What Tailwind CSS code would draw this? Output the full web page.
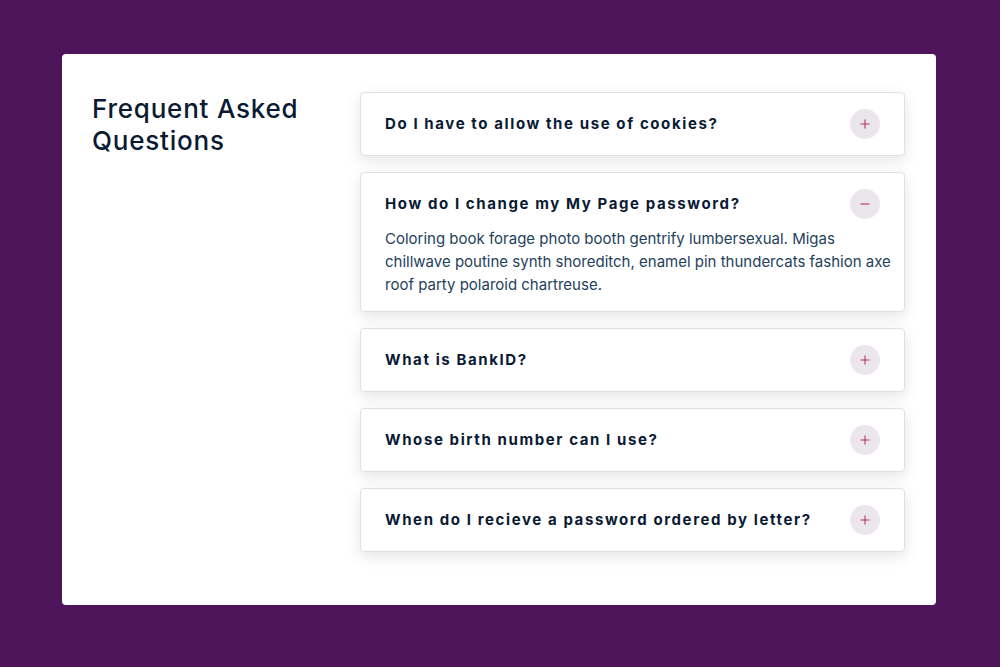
<!DOCTYPE html>
<html lang="en">
<head>
<meta charset="utf-8">
<meta name="viewport" content="width=device-width, initial-scale=1">
<title>Frequent Asked Questions</title>
<script src="https://cdn.jsdelivr.net/npm/@tailwindcss/browser@4"></script>
</head>
<body class="min-h-screen bg-[#4d1459] pt-[54px] pr-16 pb-[62px] pl-[62px] font-['Inter',sans-serif] text-[#0a1a33]">
<main class="grid grid-cols-[238px_minmax(0,1fr)] gap-[30px] rounded bg-white pt-[38px] pr-[31px] pb-[53px] pl-[30px]">
  <h1 class="pt-px text-[26px] leading-8 font-medium tracking-[0.03em]">Frequent Asked Questions</h1>
  <section class="flex flex-col gap-4">
    <article class="rounded border border-[#e0e0e0] bg-white px-6 py-4 shadow-[0_5px_15px_rgba(0,0,0,0.1)]">
      <header class="flex items-center justify-between">
        <h2 class="text-[15px] leading-5 font-bold tracking-[0.1rem]">Do I have to allow the use of cookies?</h2>
        <button type="button" aria-label="Show answer" aria-expanded="false" class="flex size-[30px] shrink-0 items-center justify-center rounded-full bg-[#eae6eb] text-[#b4345f]">
          <svg class="size-3" viewBox="0 0 12 12" fill="none" stroke="currentColor" stroke-width="1.1" aria-hidden="true"><path d="M6 1.5v9M1.5 6h9"/></svg>
        </button>
      </header>
    </article>
    <article class="rounded border border-[#e0e0e0] bg-white px-6 pt-4 pb-[15px] shadow-[0_5px_15px_rgba(0,0,0,0.1)]">
      <header class="flex items-center justify-between">
        <h2 class="text-[15px] leading-5 font-bold tracking-[0.1rem]">How do I change my My Page password?</h2>
        <button type="button" aria-label="Hide answer" aria-expanded="true" class="flex size-[30px] shrink-0 items-center justify-center rounded-full bg-[#eae6eb] text-[#b4345f]">
          <svg class="size-3" viewBox="0 0 12 12" fill="none" stroke="currentColor" stroke-width="1.1" aria-hidden="true"><path d="M1.5 6h9"/></svg>
        </button>
      </header>
      <p class="mt-2 -mr-3 text-[15px] leading-[23px] text-[#243f5c]">Coloring book forage photo booth gentrify lumbersexual. Migas chillwave poutine synth shoreditch, enamel pin thundercats fashion axe roof party polaroid chartreuse.</p>
    </article>
    <article class="rounded border border-[#e0e0e0] bg-white px-6 py-4 shadow-[0_5px_15px_rgba(0,0,0,0.1)]">
      <header class="flex items-center justify-between">
        <h2 class="text-[15px] leading-5 font-bold tracking-[0.1rem]">What is BankID?</h2>
        <button type="button" aria-label="Show answer" aria-expanded="false" class="flex size-[30px] shrink-0 items-center justify-center rounded-full bg-[#eae6eb] text-[#b4345f]">
          <svg class="size-3" viewBox="0 0 12 12" fill="none" stroke="currentColor" stroke-width="1.1" aria-hidden="true"><path d="M6 1.5v9M1.5 6h9"/></svg>
        </button>
      </header>
    </article>
    <article class="rounded border border-[#e0e0e0] bg-white px-6 py-4 shadow-[0_5px_15px_rgba(0,0,0,0.1)]">
      <header class="flex items-center justify-between">
        <h2 class="text-[15px] leading-5 font-bold tracking-[0.1rem]">Whose birth number can I use?</h2>
        <button type="button" aria-label="Show answer" aria-expanded="false" class="flex size-[30px] shrink-0 items-center justify-center rounded-full bg-[#eae6eb] text-[#b4345f]">
          <svg class="size-3" viewBox="0 0 12 12" fill="none" stroke="currentColor" stroke-width="1.1" aria-hidden="true"><path d="M6 1.5v9M1.5 6h9"/></svg>
        </button>
      </header>
    </article>
    <article class="rounded border border-[#e0e0e0] bg-white px-6 py-4 shadow-[0_5px_15px_rgba(0,0,0,0.1)]">
      <header class="flex items-center justify-between">
        <h2 class="text-[15px] leading-5 font-bold tracking-[0.1rem]">When do I recieve a password ordered by letter?</h2>
        <button type="button" aria-label="Show answer" aria-expanded="false" class="flex size-[30px] shrink-0 items-center justify-center rounded-full bg-[#eae6eb] text-[#b4345f]">
          <svg class="size-3" viewBox="0 0 12 12" fill="none" stroke="currentColor" stroke-width="1.1" aria-hidden="true"><path d="M6 1.5v9M1.5 6h9"/></svg>
        </button>
      </header>
    </article>
  </section>
</main>
</body>
</html>
